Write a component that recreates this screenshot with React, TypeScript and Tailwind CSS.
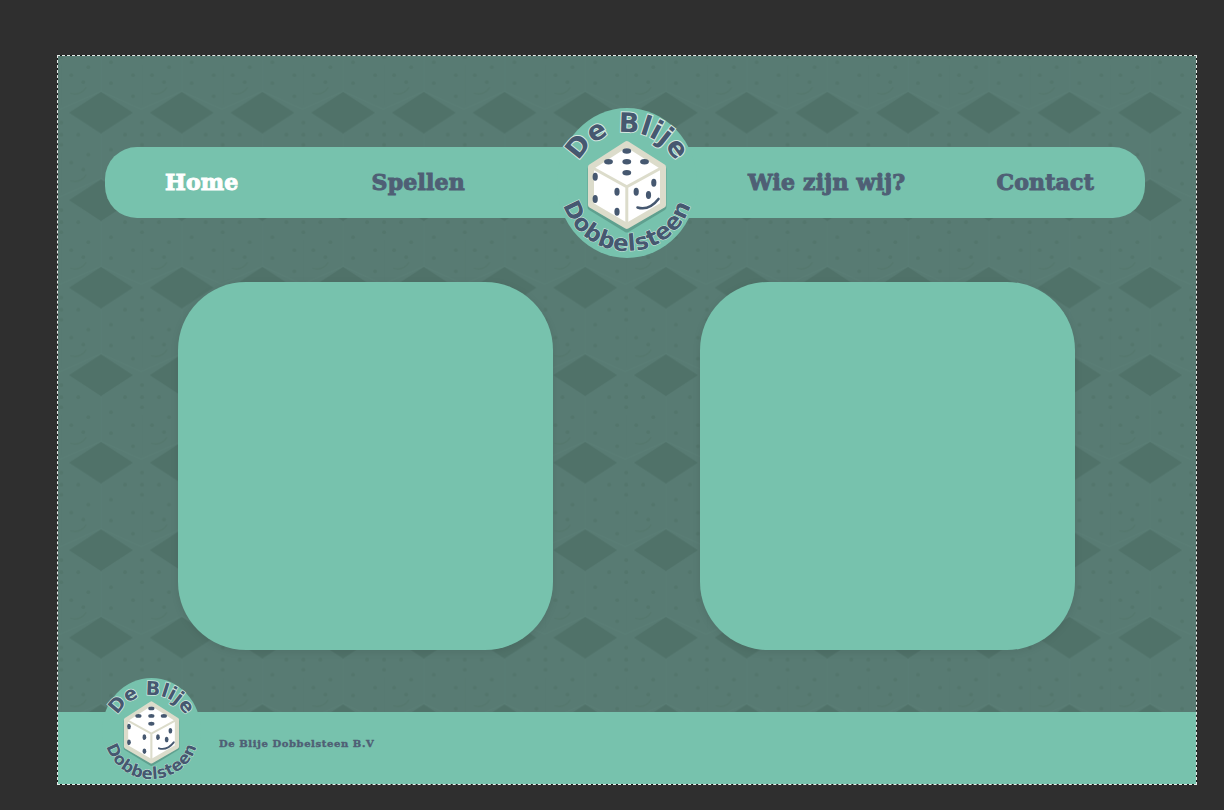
// App.tsx
const slab = "font-['DejaVu_Serif',serif] font-bold [-webkit-text-stroke:1px_currentColor]";

const topDots = [[69.8, 43], [51.5, 53.7], [69.8, 53.7], [87.5, 53.7], [69.8, 64.7]];
const sideDots = [[38.2, 68.7], [38.2, 91], [60, 83.7], [60, 103.7], [79.2, 83.7], [96.8, 74.7], [91.5, 87]];

// logo: die with a smile inside a round badge, text on two arcs
function Logo({ id, className }: { id: string; className: string }) {
  return (
    <svg viewBox="0 0 140 150" className={className}>
      <ellipse cx="70" cy="75" rx="70" ry="75" fill="#77c2ad" />
      <path id={id + "-top"} d="M 16 78 A 54 54 0 0 1 124 78" fill="none" />
      <path id={id + "-bottom"} d="M 4 80 A 66 63 0 0 0 136 80" fill="none" />
      <text fontFamily="'DejaVu Sans', sans-serif" fontWeight="700" fontSize="27" fill="#465870" stroke="#d5e8e0" strokeWidth="2" paintOrder="stroke">
        <textPath href={"#" + id + "-top"} startOffset="50%" textAnchor="middle">De Blije</textPath>
      </text>
      <text fontFamily="'DejaVu Sans', sans-serif" fontWeight="700" fontSize="23" fill="#465870" stroke="#d5e8e0" strokeWidth="1" paintOrder="stroke" letterSpacing="0.4">
        <textPath href={"#" + id + "-bottom"} startOffset="50%" textAnchor="middle">Dobbelsteen</textPath>
      </text>
      <path d="M69.8 40 L106 61 V99 L69.8 121 L34 99 V61 Z" fill="#5fa08f" stroke="#5fa08f" strokeWidth="7" strokeLinejoin="round" />
      <path d="M69.8 36 L106 59 V97 L69.8 118 L34 97 V59 Z" fill="#ffffff" stroke="#dcdccb" strokeWidth="6" strokeLinejoin="round" />
      <path d="M34 59 L69.8 78.7 L106 59 M69.8 78.7 V118" fill="none" stroke="#dcdccb" strokeWidth="3" />
      {topDots.map(([x, y]) => (
        <ellipse key={x + "-" + y} cx={x} cy={y} rx="4.4" ry="2.7" fill="#465870" />
      ))}
      {sideDots.map(([x, y]) => (
        <ellipse key={x + "-" + y} cx={x} cy={y} rx="2.6" ry="4" fill="#465870" />
      ))}
      <path d="M80.5 99.5 Q92 103 101.5 91" fill="none" stroke="#465870" strokeWidth="2.6" strokeLinecap="round" />
    </svg>
  );
}

// faint repeating dice and diamonds behind everything
function Pattern() {
  const corners = [[0, 0], [80.7, 0], [0, 87.5], [80.7, 87.5]];
  const dots = [
    [41, 10], [24, 22], [41, 22], [58, 22], [41, 32],
    [10, 37], [32, 50], [10, 58], [32, 71],
    [51, 50], [68, 42], [63, 57],
  ];
  return (
    <svg className="absolute inset-0 h-full w-full blur-[0.6px]">
      <defs>
        <pattern id="dice" width="80.7" height="87.5" patternUnits="userSpaceOnUse" patternTransform="translate(43 56.7)">
          {corners.map(([x, y]) => (
            <path key={x + "-" + y} d={`M${x - 32} ${y} L${x} ${y - 21} L${x + 32} ${y} L${x} ${y + 21} Z`} fill="#507269" />
          ))}
          <path d="M0 22 V66 L40 84 L81 66 V22" fill="none" stroke="#5f837a" strokeWidth="0.8" opacity="0.4" />
          <path d="M41 40 V80" fill="none" stroke="#52756c" strokeWidth="0.8" opacity="0.4" />
          {dots.map(([x, y]) => (
            <circle key={x + "-" + y} cx={x} cy={y} r="2" fill="#527469" opacity="0.7" />
          ))}
          <path d="M50 68 Q60 71 66 62" fill="none" stroke="#527469" strokeWidth="1.5" opacity="0.6" />
        </pattern>
      </defs>
      <rect width="100%" height="100%" fill="#587b73" />
      <rect width="100%" height="100%" fill="url(#dice)" />
    </svg>
  );
}

export default function App() {
  return (
    <div className="h-[810px] w-[1224px] overflow-hidden bg-[#2f2f2f] pl-[57px] pt-[55px]">
      <div className="w-[1140px] border border-dashed border-[#e6ebe9] bg-[#1c1f1e]">
        <div className="relative h-[728px] w-[1138px] overflow-hidden">
          <Pattern />

          <div className="relative pt-[91px]">
            <nav className={`relative ml-[47px] mr-[51px] flex h-[71px] items-center justify-between rounded-[32px] bg-[#77c2ad] pb-[1px] pl-[60px] pr-[51px] text-[22px] tracking-[0.2px] text-[#4f5f75] ${slab}`}>
              <div className="flex gap-[133px]">
                <a className="text-white">Home</a>
                <a>Spellen</a>
              </div>
              <div className="flex gap-[91px]">
                <a>Wie zijn wij?</a>
                <a>Contact</a>
              </div>
              <Logo id="nav-logo" className="absolute -top-[39px] left-[452px] h-[150px] w-[140px]" />
            </nav>

            <div className="ml-[120px] mt-[64px] flex gap-[147px]">
              <div className="h-[368px] w-[375px] rounded-[68px] bg-[#77c2ad] shadow-[0_2px_8px_rgba(0,0,0,0.08)]" />
              <div className="h-[368px] w-[375px] rounded-[68px] bg-[#77c2ad] shadow-[0_2px_8px_rgba(0,0,0,0.08)]" />
            </div>

            <footer className="relative mt-[62px] flex h-[72px] items-center bg-[#77c2ad] pl-[161px]">
              <Logo id="footer-logo" className="absolute -top-[34px] left-[44px] h-[106px] w-[99px]" />
              <p className="pb-[9px] font-['DejaVu_Serif',serif] text-[10px] font-bold tracking-[0.6px] text-[#4f5f75] [-webkit-text-stroke:0.4px_currentColor]">De Blije Dobbelsteen B.V</p>
            </footer>
          </div>
        </div>
      </div>
    </div>
  );
}
